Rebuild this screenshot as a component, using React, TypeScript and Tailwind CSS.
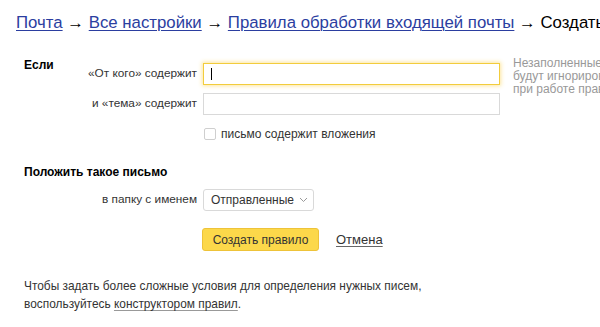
import React from "react";

export default function App() {
  const font = { fontFamily: '"Liberation Sans", Arial, sans-serif' };
  return (
    <div className="w-[600px] h-[327px] overflow-hidden bg-white text-[#000]" style={font}>
      <div className="pl-[16px] pt-[13px] whitespace-nowrap text-[16.8px] leading-[20px] text-[#000]">
        <a className="text-[#2b3ea0] underline decoration-1 underline-offset-2">Почта</a>
        <span> → </span>
        <a className="text-[#2b3ea0] underline decoration-1 underline-offset-2">Все настройки</a>
        <span> → </span>
        <a className="text-[#2b3ea0] underline decoration-1 underline-offset-2">Правила обработки входящей почты</a>
        <span> → Создать</span>
      </div>

      <div className="pl-[24px] pt-[23px] flex">
        <div className="w-[60px] shrink-0 text-[12px] font-bold leading-[16px] pt-[1px]">Если</div>
        <div className="flex flex-col shrink-0 pt-[7px]">
          <div className="flex items-center h-[22px]">
            <div className="w-[119px] shrink-0 whitespace-nowrap text-right pr-[6px] text-[11.8px] text-[#333]">«От кого» содержит</div>
            <div className="w-[297px] shrink-0 h-[22px] border border-[#f2cc3c] bg-white shadow-[0_0_4px_1px_rgba(250,200,40,0.45)] flex items-center pl-[7px]">
              <div className="w-px h-[12px] bg-black" />
            </div>
          </div>
          <div className="flex items-center h-[22px] mt-[8px]">
            <div className="w-[119px] shrink-0 whitespace-nowrap text-right pr-[6px] text-[11.8px] text-[#333]">и «тема» содержит</div>
            <div className="w-[297px] shrink-0 h-[22px] border border-[#d9d9d9] bg-white" />
          </div>
          <div className="flex items-center h-[14px] mt-[12px] pl-[120px]">
            <div className="w-[12px] h-[12px] border border-[#cfcfcf] rounded-[2px] bg-white" />
            <span className="ml-[5px] text-[12px] leading-[14px] text-[#333] whitespace-nowrap">письмо содержит вложения</span>
          </div>
        </div>
        <div className="ml-[13px] shrink-0 text-[12px] leading-[13px] text-[#999] whitespace-nowrap pt-[1px]">
          Незаполненные поля<br />будут игнорироваться<br />при работе правила
        </div>
      </div>

      <div className="pl-[24px] pt-[23px] text-[12px] font-bold leading-[16px]">Положить такое письмо</div>

      <div className="pl-[84px] mt-[9px] flex items-center h-[22px]">
        <div className="w-[119px] shrink-0 whitespace-nowrap text-right pr-[6px] text-[11.8px] text-[#333]">в папку с именем</div>
        <div className="w-[111px] h-[22px] border border-[#d9d9d9] rounded-[3px] flex items-center pl-[7px] text-[12px] text-[#333] whitespace-nowrap">
          Отправленные
          <svg width="9" height="6" viewBox="0 0 9 6" className="ml-[5px]">
            <path d="M1 1l3.5 3.5L8 1" fill="none" stroke="#999" strokeWidth="1" />
          </svg>
        </div>
      </div>

      <div className="pl-[202px] mt-[17px] flex items-center h-[23px]">
        <button className="w-[117px] h-[23px] bg-[#fcd84a] border border-[#eec339] rounded-[3px] text-[12px] text-[#333]" style={font}>
          Создать правило
        </button>
        <a className="ml-[17px] text-[13px] text-[#333] underline underline-offset-2 decoration-[#666]">Отмена</a>
      </div>

      <div className="pl-[24px] pt-[26px] text-[11.9px] leading-[18px] text-[#333]">
        Чтобы задать более сложные условия для определения нужных писем,<br />
        воспользуйтесь <a className="underline underline-offset-2 decoration-[#999]">конструктором правил</a>.
      </div>
    </div>
  );
}
